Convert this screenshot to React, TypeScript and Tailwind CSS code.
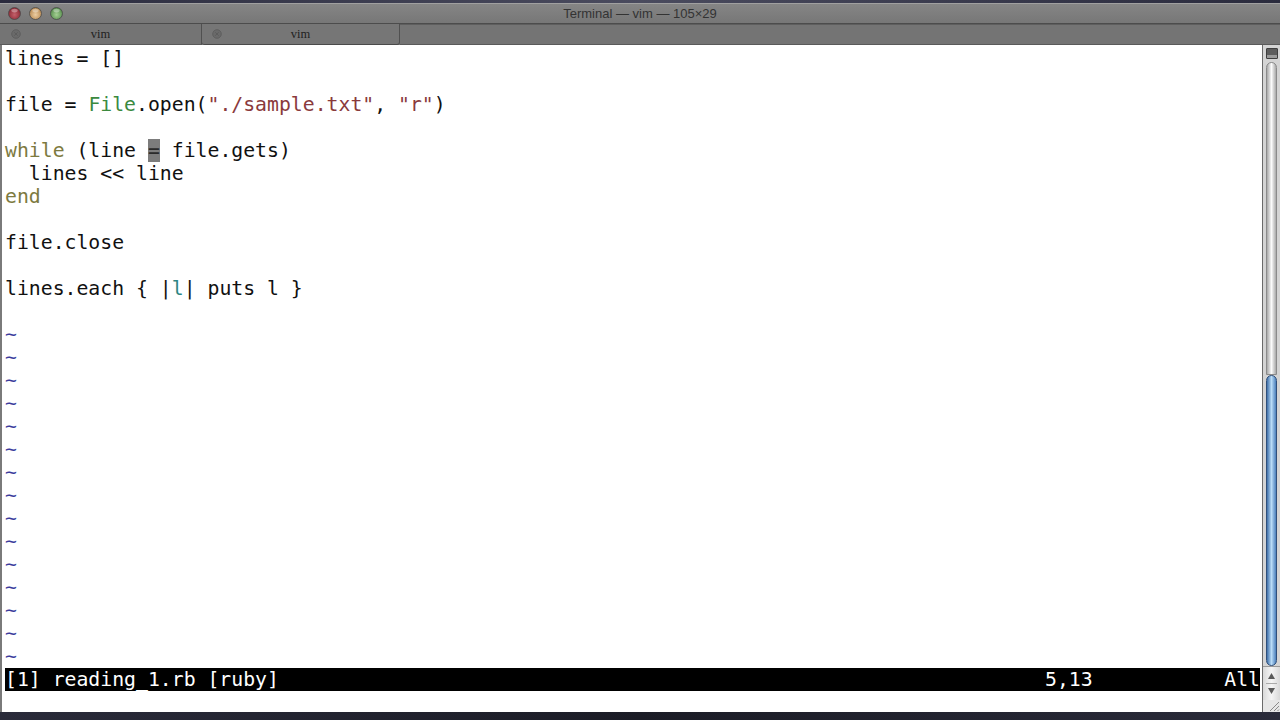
import React from 'react';

type Seg = { t: string; c?: string };

const K = 'text-[#7d7a3f]';
const G = 'text-[#3b8a3f]';
const S = 'text-[#8a3a3c]';
const T = 'text-[#2d8583]';

const code: Seg[][] = [
  [{ t: 'lines = []' }],
  [],
  [{ t: 'file = ' }, { t: 'File', c: G }, { t: '.open(' }, { t: '"./sample.txt"', c: S }, { t: ', ' }, { t: '"r"', c: S }, { t: ')' }],
  [],
  [{ t: 'while', c: K }, { t: ' (line ' }, { t: '=', c: 'cursor' }, { t: ' file.gets)' }],
  [{ t: '  lines << line' }],
  [{ t: 'end', c: K }],
  [],
  [{ t: 'file.close' }],
  [],
  [{ t: 'lines.each { |' }, { t: 'l', c: T }, { t: '| puts l }' }],
  [],
];

function Light({ color, hi }: { color: string; hi: string }) {
  return (
    <svg width="13" height="13" viewBox="0 0 13 13">
      <defs>
        <radialGradient id={`g${color}`} cx="50%" cy="60%" r="60%">
          <stop offset="0%" stopColor={hi} />
          <stop offset="100%" stopColor={color} />
        </radialGradient>
      </defs>
      <circle cx="6.5" cy="6.5" r="6" fill={`url(#g${color})`} stroke="#4a4a4a" strokeWidth="0.8" />
      <ellipse cx="6.5" cy="3.6" rx="3.2" ry="1.8" fill="#ffffff" opacity="0.35" />
    </svg>
  );
}

function TabClose() {
  return (
    <svg width="10" height="10" viewBox="0 0 10 10">
      <circle cx="5" cy="5" r="4.3" fill="#6a6a6a" stroke="#5a5a5a" strokeWidth="0.8" />
      <path d="M3.3 3.3 L6.7 6.7 M6.7 3.3 L3.3 6.7" stroke="#5c5c5c" strokeWidth="1" />
    </svg>
  );
}

function Scrollbar() {
  return (
    <div className="w-[18px] flex flex-col bg-[#d4d4d4] border-l border-[#6a6a6a]">
      <div className="h-[14px] flex items-center justify-center mt-px">
        <div className="w-[12px] h-[11px] bg-[#5c5c5c] border border-[#3e3e3e] rounded-[1px] flex items-end">
          <div className="w-full h-[3px] bg-[#9a9a9a]" />
        </div>
      </div>
      <div className="flex-1 flex flex-col px-[3px] pt-[2px]">
        <div className="h-[313px] rounded-t-full bg-gradient-to-r from-[#a8a8a8] via-[#fbfbfb] to-[#a8a8a8] border border-[#8a8a8a]" />
        <div className="flex-1 rounded-full bg-gradient-to-r from-[#3f6fa8] via-[#b9dcf7] to-[#4b7fbb] border border-[#2f4f7a]" />
      </div>
      <div className="h-[34px] flex flex-col items-center justify-center gap-[3px] bg-gradient-to-r from-[#d9d9d9] via-[#f5f5f5] to-[#d9d9d9] border-t border-[#999]">
        <svg width="9" height="8" viewBox="0 0 9 8"><path d="M4.5 1 L8 7 L1 7 Z" fill="#5a5a5a" /></svg>
        <div className="w-[11px] h-px bg-[#aaa]" />
        <svg width="9" height="8" viewBox="0 0 9 8"><path d="M1 1 L8 1 L4.5 7 Z" fill="#5a5a5a" /></svg>
      </div>
      <div className="h-[12px] flex items-end justify-end bg-[#e6e6e6]">
        <svg width="12" height="12" viewBox="0 0 12 12">
          <path d="M11 2 L2 11 M11 6 L6 11 M11 9.5 L9.5 11" stroke="#8a8a8a" strokeWidth="1" />
        </svg>
      </div>
    </div>
  );
}

export default function App() {
  const mono = { fontFamily: '"DejaVu Sans Mono", "Liberation Mono", monospace' };
  return (
    <div className="w-[1280px] h-[720px] overflow-hidden flex flex-col bg-[#1c1d28]">
      {/* desktop strip */}
      <div className="h-[3px] bg-gradient-to-r from-[#2a2b3d] via-[#4a4b5e] to-[#2a2b3d]" />

      {/* title bar */}
      <div className="h-[21px] relative flex items-center bg-gradient-to-b from-[#858585] to-[#777777] border-t border-[#a0a0a0] border-b border-b-[#4c4c4c]">
        <div className="flex items-center gap-[8px] pl-[8px]">
          <Light color="#862530" hi="#c4606a" />
          <Light color="#b3834a" hi="#eccda2" />
          <Light color="#4f8746" hi="#a4d093" />
        </div>
        <div
          className="absolute inset-0 flex items-center justify-center text-[13px] text-[#333]"
          style={{ fontFamily: '"Liberation Sans", Arial, sans-serif' }}
        >
          Terminal — vim — 105×29
        </div>
      </div>

      {/* tab bar */}
      <div
        className="h-[21px] flex bg-[#747474] text-[12.5px] text-[#1f1f1f]"
        style={{ fontFamily: '"Liberation Serif", "Times New Roman", serif' }}
      >
        <div className="w-[202px] relative flex items-center justify-center border-r border-[#505050] border-b border-b-[#5a5a5a]">
          <div className="absolute left-[11px] top-[5px]"><TabClose /></div>
          vim
        </div>
        <div className="w-[198px] relative flex items-center justify-center border-r border-[#505050] border-b border-b-[#4a4a4a] rounded-b-[3px] bg-[#767676]">
          <div className="absolute left-[10px] top-[5px]"><TabClose /></div>
          vim
        </div>
        <div className="flex-1 border-t border-[#5e5e5e] border-b border-b-[#5a5a5a]" />
      </div>

      {/* terminal body */}
      <div className="h-[667px] flex bg-white border-l-2 border-[#7a7a7a]">
        <div className="flex-1 pl-[3px] pt-[2px] overflow-hidden text-[19.8px] leading-[23px] text-[#111]" style={mono}>
          {code.map((row, i) => (
            <div key={i} className="h-[23px] whitespace-pre">
              {row.map((s, j) =>
                s.c === 'cursor' ? (
                  <span key={j} className="bg-[#7c7c7c] text-[#2a2a2a]">{s.t}</span>
                ) : (
                  <span key={j} className={s.c}>{s.t}</span>
                ),
              )}
            </div>
          ))}
          {Array.from({ length: 15 }).map((_, i) => (
            <div key={`t${i}`} className="h-[23px] text-[#3b3b9c]">~</div>
          ))}
          <div className="h-[23px] w-[1255px] bg-black text-white whitespace-pre flex">
            <span className="w-[1040px]">[1] reading_1.rb [ruby]</span>
            <span className="flex-1">5,13</span>
            <span>All</span>
          </div>
          <div className="h-[23px]" />
        </div>
        <Scrollbar />
      </div>

      <div className="flex-1 bg-gradient-to-r from-[#2a2b3a] via-[#1b1c26] to-[#2a2b3a]" />
    </div>
  );
}
